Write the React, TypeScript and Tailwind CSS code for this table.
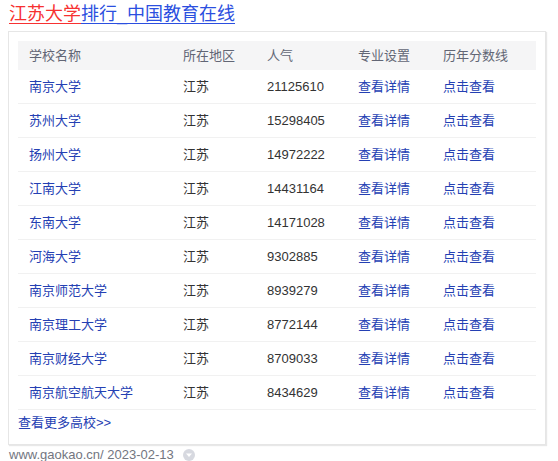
import React from "react";

const rows = [
  ["南京大学", "江苏", "21125610"],
  ["苏州大学", "江苏", "15298405"],
  ["扬州大学", "江苏", "14972222"],
  ["江南大学", "江苏", "14431164"],
  ["东南大学", "江苏", "14171028"],
  ["河海大学", "江苏", "9302885"],
  ["南京师范大学", "江苏", "8939279"],
  ["南京理工大学", "江苏", "8772144"],
  ["南京财经大学", "江苏", "8709033"],
  ["南京航空航天大学", "江苏", "8434629"],
];

const cols = "grid grid-cols-[165px_84px_91px_85px_93px]";

export default function App() {
  return (
    <div
      className="w-[558px] h-[461px] bg-white overflow-hidden text-[13px]"
      style={{ fontFamily: '"Liberation Sans", Arial, "Noto Sans CJK SC", sans-serif' }}
    >
      <div className="pl-[9px] pt-[1px] h-[31px]">
        <a className="text-[18px] leading-[26px] underline decoration-1 underline-offset-[3px] text-[#2b4fe0] decoration-[#2b4fe0]">
          <span className="text-[#f73131] decoration-[#f73131] underline">江苏大学</span>排行_中国教育在线
        </a>
      </div>
      <div className="ml-[8px] w-[538px] border border-[#e6e6e6] shadow-[1px_1px_1px_#e8e8e8] px-[9px] pt-[9px] pb-[9px]">
        <div className={`${cols} bg-[#f5f5f6] h-[29px] items-center text-[#626675]`}>
          <div className="pl-[11px]">学校名称</div>
          <div>所在地区</div>
          <div>人气</div>
          <div>专业设置</div>
          <div>历年分数线</div>
        </div>
        {rows.map((r) => (
          <div key={r[0]} className={`${cols} h-[34px] items-center border-b border-[#f1f1f1]`}>
            <div className="pl-[11px] text-[#2440b3]">{r[0]}</div>
            <div className="text-[#333]">{r[1]}</div>
            <div className="text-[#333]">{r[2]}</div>
            <div className="text-[#2440b3]">查看详情</div>
            <div className="text-[#2440b3]">点击查看</div>
          </div>
        ))}
        <div className="h-[25px] flex items-center text-[#2440b3]">查看更多高校&gt;&gt;</div>
      </div>
      <div className="pl-[9px] mt-[2px] flex items-center h-[16px] text-[#73767f]">
        <span>www.gaokao.cn/ 2023-02-13</span>
        <span className="ml-[9px] w-[12px] h-[12px] rounded-full bg-[#d7d9e0] flex items-center justify-center">
          <svg width="8" height="6" viewBox="0 0 8 6">
            <path d="M1 1.5 L7 1.5 L4 5 Z" fill="#fff" />
          </svg>
        </span>
      </div>
    </div>
  );
}
